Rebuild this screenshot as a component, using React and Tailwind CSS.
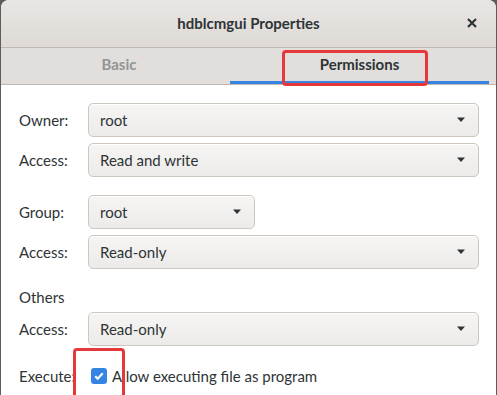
import { useState } from 'react'

const font = { fontFamily: 'Lato, "Noto Sans", sans-serif' }

function Arrow() {
  return (
    <svg width="10" height="6" viewBox="0 0 10 6" className="shrink-0">
      <path d="M1 0.5h8L5 5z" fill="#2e3436" />
    </svg>
  )
}

function Combo({ value, className = '' }) {
  return (
    <div className={`h-[34px] flex items-center justify-between pl-[11px] pr-[12px] rounded-[5px] border border-[#cdc7c2] bg-gradient-to-b from-[#f6f5f4] to-[#edebe9] shadow-[inset_0_1px_0_#ffffff] text-[15px] text-[#2e3436] ${className}`}>
      <span>{value}</span>
      <Arrow />
    </div>
  )
}

function Row({ label, value, comboClass = 'flex-1', className = '' }) {
  return (
    <div className={`flex items-center ${className}`}>
      <span className="w-[69px] shrink-0 text-[15px] text-[#2e3436]">{label}</span>
      <Combo value={value} className={comboClass} />
    </div>
  )
}

export default function App() {
  const [exec, setExec] = useState(true)

  return (
    <div className="w-[497px] h-[395px] bg-[#5d5d5d] overflow-hidden relative" style={font}>
      <div className="ml-[1px] w-[495px] h-[400px] rounded-t-[8px] bg-white flex flex-col overflow-hidden">
        <div className="h-[48px] shrink-0 flex items-center relative bg-gradient-to-b from-[#e8e6e3] to-[#dedad6] border-b border-[#bfb8b1]">
          <div className="flex-1 text-center text-[15px] font-bold text-[#2e3436]">hdblcmgui Properties</div>
          <span className="absolute right-[17px] top-[16px] text-[#2e3436]">
            <svg width="14" height="14" viewBox="0 0 14 14">
              <path d="M3 3l8 8M11 3l-8 8" stroke="#2e3436" strokeWidth="2.2" />
            </svg>
          </span>
        </div>
        <div className="h-[37px] shrink-0 flex items-stretch bg-[#e1dedb] border-b border-[#bfb8b1]">
          <div className="ml-[7px] w-[222px] flex items-center justify-center text-[15px] font-bold text-[#929595] border-b-[3px] border-transparent">Basic</div>
          <div className="w-[259px] flex items-center justify-center text-[15px] font-bold text-[#2e3436] border-b-[3px] border-[#3584e4]">Permissions</div>
        </div>
        <div className="flex flex-col pl-[18px] pr-[17px] pt-[18px]">
          <Row label="Owner:" value="root" />
          <Row label="Access:" value="Read and write" className="mt-[6px]" />
          <Row label="Group:" value="root" comboClass="w-[167px]" className="mt-[18px]" />
          <Row label="Access:" value="Read-only" className="mt-[6px]" />
          <div className="mt-[18px] h-[20px] leading-[20px] text-[15px] text-[#2e3436]">Others</div>
          <Row label="Access:" value="Read-only" className="mt-[5px]" />
          <div className="mt-[20px] h-[20px] flex items-center text-[15px] text-[#2e3436]">
            <span className="w-[72px] shrink-0">Execute:</span>
            <button
              onClick={() => setExec(!exec)}
              className={`w-[16px] h-[16px] rounded-[3px] flex items-center justify-center ${exec ? 'bg-[#3584e4]' : 'bg-white border border-[#cdc7c2]'}`}
            >
              {exec && (
                <svg width="12" height="12" viewBox="0 0 12 12">
                  <path d="M2.2 6.2l2.5 2.5 5-5.4" fill="none" stroke="#ffffff" strokeWidth="2" />
                </svg>
              )}
            </button>
            <span className="ml-[5px]">Allow executing file as program</span>
          </div>
        </div>
      </div>
      <div className="absolute left-[282px] top-[50px] w-[146px] h-[36px] border-[3px] border-[#e5383b] rounded-[4px]" />
      <div className="absolute left-[73px] top-[348px] w-[52px] h-[52px] border-[3px] border-[#e5383b] rounded-[4px]" />
    </div>
  )
}
